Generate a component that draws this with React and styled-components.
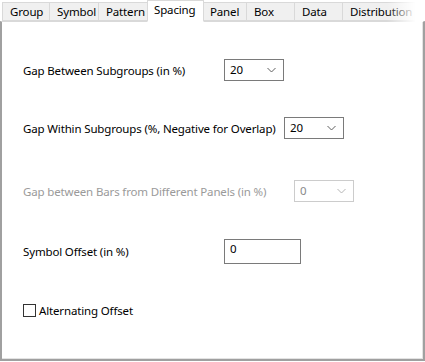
import React from 'react';
import styled, { createGlobalStyle } from 'styled-components';

const GlobalStyle = createGlobalStyle`
  html, body {
    margin: 0;
    padding: 0;
    background: #ffffff;
  }
  body {
    font-family: "Noto Sans", "Liberation Sans", sans-serif;
    font-size: 11.5px;
    letter-spacing: -0.15px;
    color: #000;
  }
`;

const Dialog = styled.div`
  width: 425px;
  height: 362px;
  display: flex;
  flex-direction: column;
  box-sizing: border-box;
`;

const TabStrip = styled.div`
  position: relative;
  height: 22px;
  display: flex;
  align-items: flex-end;
  padding-left: 2px;
  margin-right: 2px;
  overflow: hidden;
  flex-shrink: 0;
  z-index: 1;
  margin-bottom: -1px;
`;

const Tab = styled.div`
  width: ${({ $w }) => $w}px;
  flex-shrink: 0;
  box-sizing: border-box;
  height: ${({ $active }) => ($active ? '22px' : '19px')};
  margin-bottom: ${({ $active }) => ($active ? '0' : '1px')};
  background: ${({ $active }) => ($active ? '#ffffff' : '#f0f0f0')};
  border: 1px solid #d9d9d9;
  border-bottom: ${({ $active }) => ($active ? '1px solid #ffffff' : '1px solid #d9d9d9')};
  border-left: ${({ $first, $active }) => ($first || $active ? '1px solid #d9d9d9' : 'none')};
  margin-left: ${({ $active }) => ($active ? '-1px' : '0')};
  margin-right: ${({ $active }) => ($active ? '-1px' : '0')};
  position: relative;
  z-index: ${({ $active }) => ($active ? 2 : 1)};
  display: flex;
  align-items: center;
  padding-left: ${({ $active }) => ($active ? '6px' : '7px')};
  padding-bottom: ${({ $active }) => ($active ? '3px' : '1px')};
  white-space: nowrap;
  overflow: hidden;
  color: #000;
`;

const Fade = styled.div`
  position: absolute;
  right: 0;
  top: 0;
  bottom: 0;
  width: 36px;
  background: linear-gradient(to right, rgba(255, 255, 255, 0), #ffffff 80%);
  z-index: 3;
`;

const Panel = styled.div`
  flex: 1;
  box-sizing: border-box;
  border-top: 1px solid #d9d9d9;
  border-left: 2px solid #a0a0a0;
  border-right: 2px solid #a0a0a0;
  border-bottom: 2px solid #a0a0a0;
  box-shadow: inset -1px -1px 0 #e3e3e3;
  margin-bottom: 1px;
  padding: 37px 0 0 21px;
  display: flex;
  flex-direction: column;
`;

const Row = styled.div`
  display: flex;
  align-items: center;
  margin-top: ${({ $mt }) => $mt || 0}px;
  height: ${({ $h }) => $h}px;
`;

const Label = styled.div`
  width: ${({ $w }) => $w}px;
  flex-shrink: 0;
  white-space: nowrap;
  color: ${({ $disabled }) => ($disabled ? '#9a9a9a' : '#000')};
`;

const Combo = styled.div`
  width: 60px;
  height: 22px;
  box-sizing: border-box;
  border: 1px solid ${({ $disabled }) => ($disabled ? '#cccccc' : '#7a7a7a')};
  background: #fff;
  display: flex;
  align-items: center;
  justify-content: space-between;
  padding: 0 7px 1px 5px;
  color: ${({ $disabled }) => ($disabled ? '#8a8a8a' : '#000')};
`;

const Chevron = ({ disabled }) => (
  <svg width="9" height="6" viewBox="0 0 9 6">
    <path
      d="M0.5 1 L4.5 5 L8.5 1"
      fill="none"
      stroke={disabled ? '#b5b5b5' : '#606060'}
      strokeWidth="1"
    />
  </svg>
);

const TextBox = styled.div`
  width: 77px;
  height: 25px;
  box-sizing: border-box;
  border: 1px solid #7a7a7a;
  padding: 1px 5px;
  line-height: 16px;
`;

const Check = styled.div`
  width: 13px;
  height: 13px;
  box-sizing: border-box;
  border: 1px solid #333333;
  background: #fff;
  margin-right: 3px;
`;

const tabs = [
  { name: 'Group', w: 48 },
  { name: 'Symbol', w: 49 },
  { name: 'Pattern', w: 49 },
  { name: 'Spacing', w: 57, active: true },
  { name: 'Panel', w: 44 },
  { name: 'Box', w: 48 },
  { name: 'Data', w: 48 },
  { name: 'Distribution', w: 80 },
];

const App = () => {
  return (
    <>
      <GlobalStyle />
      <Dialog>
        <TabStrip>
          {tabs.map((t, i) => (
            <Tab key={t.name} $w={t.w} $active={t.active} $first={i === 0}>
              {t.name}
            </Tab>
          ))}
          <Fade />
        </TabStrip>
        <Panel>
          <Row $h={22}>
            <Label $w={201}>Gap Between Subgroups (in %)</Label>
            <Combo>
              20
              <Chevron />
            </Combo>
          </Row>
          <Row $h={22} $mt={36}>
            <Label $w={261}>Gap Within Subgroups (%, Negative for Overlap)</Label>
            <Combo>
              20
              <Chevron />
            </Combo>
          </Row>
          <Row $h={22} $mt={41}>
            <Label $w={271} $disabled>
              Gap between Bars from Different Panels (in %)
            </Label>
            <Combo $disabled>
              0
              <Chevron disabled />
            </Combo>
          </Row>
          <Row $h={25} $mt={37}>
            <Label $w={201}>Symbol Offset (in %)</Label>
            <TextBox>0</TextBox>
          </Row>
          <Row $h={15} $mt={39}>
            <Check />
            <span>Alternating Offset</span>
          </Row>
        </Panel>
      </Dialog>
    </>
  );
};

export default App;
